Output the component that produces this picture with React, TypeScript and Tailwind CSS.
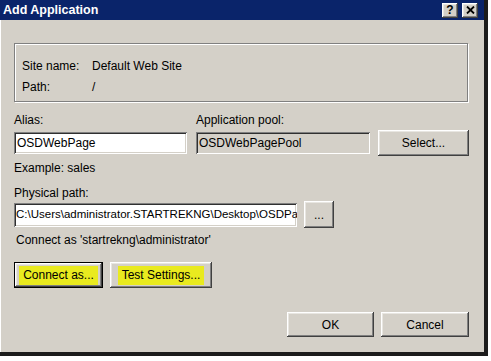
import React from "react";

const raised =
  "bg-[#d4d0c8] shadow-[inset_-1px_-1px_#404040,inset_1px_1px_#ffffff,inset_-2px_-2px_#808080,inset_2px_2px_#e8e6e1]";
const sunken =
  "shadow-[inset_1px_1px_#808080,inset_-1px_-1px_#ffffff,inset_2px_2px_#303030,inset_-2px_-2px_#d4d0c8]";

function Btn({ label, className = "", hl = false }: { label: string; className?: string; hl?: boolean }) {
  return (
    <div className={`${raised} flex items-center justify-center ${className}`}>
      {hl ? <span className="bg-[#e9ea1f] px-[4px] leading-[19px]">{label}</span> : <span>{label}</span>}
    </div>
  );
}

export default function App() {
  return (
    <div
      className="w-[491px] h-[361px] bg-white overflow-hidden text-[12px] text-black"
      style={{ fontFamily: "'Liberation Sans', Arial, sans-serif" }}
    >
      <div className="w-[488px] h-[356px] bg-[#d4d0c8] border-r-4 border-b-4 border-[#1c1c1c] shadow-[inset_1px_1px_#ffffff] flex flex-col">
        {/* title bar */}
        <div className="h-[20px] bg-[#0a246a] flex items-center justify-between pl-[3px] pr-[6px]">
          <span className="text-white font-bold text-[12.5px]">Add Application</span>
          <div className="flex gap-[4px]">
            <div className={`${raised} w-[16px] h-[15px] flex items-center justify-center font-bold text-[12px] leading-none`}>?</div>
            <div className={`${raised} w-[16px] h-[15px] flex items-center justify-center`}>
              <svg width="9" height="8" viewBox="0 0 9 8">
                <path d="M1 0.5 L8 7.5 M8 0.5 L1 7.5" stroke="#000" strokeWidth="1.8" />
              </svg>
            </div>
          </div>
        </div>

        <div className="pl-[14px] pr-[15px] flex flex-col">
          {/* site group box */}
          <div className="mt-[23px] mr-[1px] h-[59px] border border-[#808080] shadow-[inset_1px_1px_#ffffff,1px_1px_#ffffff] pt-[12px] pl-[7px]">
            <div className="flex leading-[21px]">
              <span className="w-[70px]">Site name:</span>
              <span>Default Web Site</span>
            </div>
            <div className="flex leading-[21px]">
              <span className="w-[70px]">Path:</span>
              <span>/</span>
            </div>
          </div>

          {/* alias / pool */}
          <div className="mt-[11px] flex leading-[14px]">
            <span className="w-[182px]">Alias:</span>
            <span>Application pool:</span>
          </div>
          <div className="mt-[3px] flex items-center">
            <div className={`${sunken} bg-white w-[173px] h-[22px] pl-[3px] flex items-center`}>OSDWebPage</div>
            <div className={`${sunken} ml-[9px] w-[174px] h-[22px] pl-[3px] flex items-center`}>OSDWebPagePool</div>
            <Btn label="Select..." className="ml-[8px] w-[91px] h-[26px]" />
          </div>

          <div className="mt-[5px] leading-[14px]">Example: sales</div>

          <div className="mt-[11px] leading-[14px]">Physical path:</div>
          <div className="mt-[1px] flex items-center">
            <div className={`${sunken} bg-white w-[283px] h-[24px] pl-[2px] flex items-center overflow-hidden whitespace-nowrap text-[11.5px]`}>
              C:\Users\administrator.STARTREKNG\Desktop\OSDPa
            </div>
            <Btn label="..." className="ml-[7px] w-[30px] h-[27px]" />
          </div>

          <div className="mt-[5px] leading-[14px] pl-[2px]">Connect as 'startrekng\administrator'</div>

          <div className="mt-[15px] flex gap-[7px]">
            <div className="border border-black">
              <Btn label="Connect as..." hl className="w-[87px] h-[24px]" />
            </div>
            <Btn label="Test Settings..." hl className="w-[102px] h-[26px]" />
          </div>

          <div className="mt-[24px] flex justify-end gap-[7px]">
            <Btn label="OK" className="w-[87px] h-[25px]" />
            <Btn label="Cancel" className="w-[88px] h-[25px]" />
          </div>
        </div>
      </div>
    </div>
  );
}
